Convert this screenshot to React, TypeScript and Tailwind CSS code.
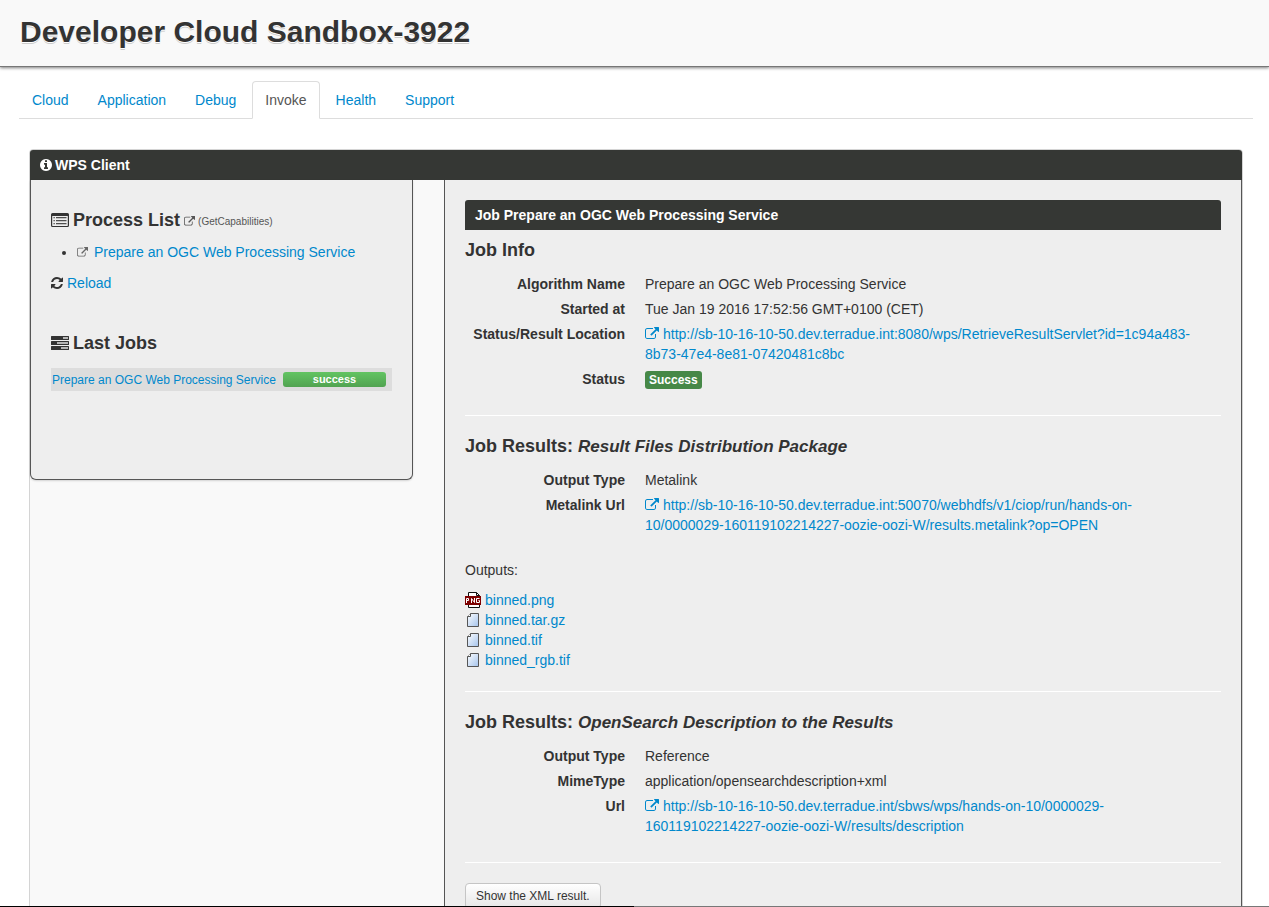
import type { ReactNode } from "react";

const linkClass = "text-[#0088cc] hover:underline";

function ExternalIcon({ className }: { className: string }) {
  return (
    <svg viewBox="0 0 1792 1792" fill="currentColor" aria-hidden="true" className={className}>
      <path d="M1408 928v320q0 119-84.5 203.5t-203.5 84.5h-832q-119 0-203.5-84.5t-84.5-203.5v-832q0-119 84.5-203.5t203.5-84.5h704q14 0 23 9t9 23v64q0 14-9 23t-23 9h-704q-66 0-113 47t-47 113v832q0 66 47 113t113 47h832q66 0 113-47t47-113v-320q0-14 9-23t23-9h64q14 0 23 9t9 23zm384-864v512q0 26-19 45t-45 19-45-19l-176-176-652 652q-10 10-23 10t-23-10l-114-114q-10-10-10-23t10-23l652-652-176-176q-19-19-19-45t19-45 45-19h512q26 0 45 19t19 45z" />
    </svg>
  );
}

function InfoIcon() {
  return (
    <svg viewBox="128 128 1536 1536" fill="currentColor" aria-hidden="true" className="h-3 w-3">
      <path d="M1152 1376v-160q0-14-9-23t-23-9h-96v-512q0-14-9-23t-23-9h-320q-14 0-23 9t-9 23v160q0 14 9 23t23 9h96v320h-96q-14 0-23 9t-9 23v160q0 14 9 23t23 9h448q14 0 23-9t9-23zm-128-896v-160q0-14-9-23t-23-9h-192q-14 0-23 9t-9 23v160q0 14 9 23t23 9h192q14 0 23-9t9-23zm640 416q0 209-103 385.5t-279.5 279.5-385.5 103-385.5-103-279.5-279.5-103-385.5 103-385.5 279.5-279.5 385.5-103 385.5 103 279.5 279.5 103 385.5z" />
    </svg>
  );
}

function ReloadIcon() {
  return (
    <svg viewBox="128 128 1536 1536" fill="currentColor" aria-hidden="true" className="h-3 w-3">
      <path d="M1639 1056q0 5-1 7-64 268-268 434.5t-478 166.5q-146 0-282.5-55t-243.5-157l-129 129q-19 19-45 19t-45-19-19-45v-448q0-26 19-45t45-19h448q26 0 45 19t19 45-19 45l-137 137q71 66 161 102t187 36q134 0 250-65t186-179q11-17 53-117 8-23 30-23h192q13 0 22.5 9.5t9.5 22.5zm25-800v448q0 26-19 45t-45 19h-448q-26 0-45-19t-19-45 19-45l138-138q-148-137-349-137-134 0-250 65t-186 179q-11 17-53 117-8 23-30 23h-199q-13 0-22.5-9.5t-9.5-22.5v-7q65-268 270-434.5t480-166.5q146 0 284 55.5t245 156.5l130-129q19-19 45-19t45 19 19 45z" />
    </svg>
  );
}

function ListIcon() {
  return (
    <svg viewBox="0 0 18 14" aria-hidden="true" className="h-3.5 w-[18px]">
      <path
        fill="currentColor"
        fillRule="evenodd"
        d="M1.5 0h15A1.5 1.5 0 0 1 18 1.5v11a1.5 1.5 0 0 1-1.5 1.5h-15A1.5 1.5 0 0 1 0 12.5v-11A1.5 1.5 0 0 1 1.5 0zM1.200 3v9.500q0 .4.4.4h14.800q.4 0 .4-.4V3z"
      />
      <path
        fill="currentColor"
        opacity="0.85"
        d="M2.500 4h1.300v1.200H2.500zM5 4h10.500v1.200H5zM2.500 7h1.300v1.200H2.500zM5 7h10.500v1.200H5zM2.500 10h1.300v1.200H2.500zM5 10h10.500v1.200H5z"
      />
    </svg>
  );
}

function TasksIcon() {
  return (
    <svg viewBox="0 0 18 14" aria-hidden="true" className="h-3.5 w-[18px]">
      <path
        fill="currentColor"
        d="M.6 0h16.800q.6 0 .6.6v2.800q0 .6-.6.6H.6Q0 4 0 3.400V.6Q0 0 .6 0zM.6 5h16.800q.6 0 .6.6v2.800q0 .6-.6.6H.6Q0 9 0 8.400V5.600Q0 5 .6 5zM.6 10h16.800q.6 0 .6.6v2.800q0 .6-.6.6H.6Q0 14 0 13.400v-2.800Q0 10 .6 10z"
      />
      <path fill="#b5b5b5" d="M12 1h5v2h-5zM6 6h11v2H6zM10 11h7v2h-7z" />
    </svg>
  );
}

function PngIcon() {
  return (
    <svg viewBox="0 0 16 16" aria-hidden="true" className="h-4 w-4 shrink-0">
      <path d="M3.500.5h8l3 3v12h-11z" fill="#fff" stroke="#111" />
      <path d="M11.500.5v3h3" fill="none" stroke="#111" />
      <rect x="0" y="4" width="16" height="9" fill="#7d0000" />
      <path
        d="M1.500 11V6.500h2v2h-2M6.500 11V6.500l3 4V6M14.500 6.500h-3v4h3v-2h-1"
        fill="none"
        stroke="#fff"
      />
    </svg>
  );
}

function FileIcon() {
  return (
    <svg viewBox="0 0 16 16" aria-hidden="true" className="h-4 w-4 shrink-0">
      <defs>
        <linearGradient id="sheet" x1="0" y1="0" x2="1" y2="1">
          <stop offset="0.1" stopColor="#f4f8fd" />
          <stop offset="1" stopColor="#a4c3ec" />
        </linearGradient>
      </defs>
      <path d="M5.500 1.500h8v13h-11v-10z" fill="url(#sheet)" stroke="#555" />
      <path d="M5.500 1.500v3h-3" fill="#fff" stroke="#555" />
    </svg>
  );
}

function Bar({ children }: { children: ReactNode }) {
  return (
    <h2 className="flex h-[30px] items-center gap-[3px] rounded-t-[3px] bg-[#353734] px-2.5 text-sm font-bold text-white">
      {children}
    </h2>
  );
}

function Row({ label, children }: { label: string; children: ReactNode }) {
  return (
    <div className="mb-[5px] flex gap-5">
      <dt className="w-40 shrink-0 text-right font-bold">{label}</dt>
      <dd className="min-w-0 flex-1 pr-4">{children}</dd>
    </div>
  );
}

function Url({ children }: { children: ReactNode }) {
  return (
    <a href="#result" className={linkClass}>
      <ExternalIcon className="mr-1 inline h-3.5 w-3.5 align-[-2px]" />
      {children}
    </a>
  );
}

function Rule() {
  return <hr className="border-t border-white" />;
}

const tabs = ["Cloud", "Application", "Debug", "Invoke", "Health", "Support"];
const files = ["binned.png", "binned.tar.gz", "binned.tif", "binned_rgb.tif"];

export default function App() {
  return (
    <div className="flex h-screen flex-col overflow-hidden bg-white font-['Helvetica_Neue','Liberation_Sans',sans-serif] text-sm/5 text-[#333333]">
      <header className="relative flex h-[67px] shrink-0 items-start border-b border-[#777] bg-[#f9f9f9] px-5 pt-3 shadow-[0_1px_3px_rgba(0,0,0,0.5)]">
        <h1 className="text-[30px] leading-10 font-bold [text-shadow:0_1px_0_#fff,0_2px_0_#ccc]">
          Developer Cloud Sandbox-3922
        </h1>
      </header>

      <main className="min-h-0 flex-1 overflow-hidden pt-3.5">
        <nav className="mr-4 ml-[19px] flex gap-[3px] border-b border-[#dddddd]">
          {tabs.map((tab) =>
            tab === "Invoke" ? (
              <a
                key={tab}
                href="#invoke"
                aria-current="page"
                className="-mb-px rounded-t border border-[#dddddd] border-b-white bg-white px-3 py-2 text-[#555555]"
              >
                {tab}
              </a>
            ) : (
              <a
                key={tab}
                href={`#${tab.toLowerCase()}`}
                className="-mb-px border border-transparent px-3 py-2 text-[#0088cc]"
              >
                {tab}
              </a>
            ),
          )}
        </nav>

        <div className="mt-[30px] mr-[26px] ml-[29px] rounded-t border border-[#d4d4d4] bg-[#f9f9f9]">
          <Bar>
            <InfoIcon />
            WPS Client
          </Bar>
          <div className="flex items-start gap-[31px]">
            <section className="h-[300px] w-[383px] shrink-0 rounded-b-md border border-t-0 border-[#555] bg-[#eeeeee] px-5 pt-5 shadow-[0_1px_2px_rgba(0,0,0,0.15)]">
              <h3 className="flex h-10 items-center gap-1 text-lg font-bold">
                <ListIcon />
                Process List
                <a
                  href="#capabilities"
                  className="flex items-center gap-[3px] pt-1 text-[10px] font-normal text-[#555]"
                >
                  <ExternalIcon className="h-[11px] w-[11px]" />
                  (GetCapabilities)
                </a>
              </h3>
              <ul className="mt-0.5 list-disc pl-[26px]">
                <li>
                  <a href="#process" className={linkClass}>
                    <ExternalIcon className="mr-1.5 inline h-[11px] w-[11px] align-[-1px] text-[#666]" />
                    Prepare an OGC Web Processing Service
                  </a>
                </li>
              </ul>
              <button type="button" className="mt-[11px] flex items-center gap-1">
                <ReloadIcon />
                <span className="text-[#0088cc]">Reload</span>
              </button>

              <h3 className="mt-[30px] flex h-10 items-center gap-1 text-lg font-bold">
                <TasksIcon />
                Last Jobs
              </h3>
              <div className="mt-[5px] flex h-[23px] items-center justify-between bg-[#dddddd] pr-1.5 pl-px text-xs">
                <a href="#job" className={linkClass}>
                  Prepare an OGC Web Processing Service
                </a>
                <span className="flex h-[15px] w-[103px] items-center justify-center rounded-[3px] bg-linear-to-b from-[#62c462] to-[#51a351] text-[11px] font-bold text-white">
                  success
                </span>
              </div>
            </section>

            <section className="min-w-0 flex-1 border border-y-0 border-[#555] bg-[#eeeeee] p-5">
              <Bar>Job Prepare an OGC Web Processing Service</Bar>
              <h3 className="text-lg/10 font-bold">Job Info</h3>
              <dl className="mt-1 mb-[26px]">
                <Row label="Algorithm Name">Prepare an OGC Web Processing Service</Row>
                <Row label="Started at">Tue Jan 19 2016 17:52:56 GMT+0100 (CET)</Row>
                <Row label="Status/Result Location">
                  <Url>http://sb-10-16-10-50.dev.terradue.int:8080/wps/RetrieveResultServlet?id=1c94a483-8b73-47e4-8e81-07420481c8bc</Url>
                </Row>
                <Row label="Status">
                  <span className="inline-block rounded-[3px] bg-[#468847] px-1 py-0.5 text-xs/[14px] font-bold text-white">
                    Success
                  </span>
                </Row>
              </dl>
              <Rule />
              <h3 className="mt-2.5 text-lg/10 font-bold">
                Job Results: <em className="text-[17px]/none">Result Files Distribution Package</em>
              </h3>
              <dl className="mt-1">
                <Row label="Output Type">Metalink</Row>
                <Row label="Metalink Url">
                  <Url>http://sb-10-16-10-50.dev.terradue.int:50070/webhdfs/v1/ciop/run/hands-on-10/0000029-160119102214227-oozie-oozi-W/results.metalink?op=OPEN</Url>
                </Row>
              </dl>
              <p className="mt-[25px] mb-2.5">Outputs:</p>
              <ul className="mb-[21px]">
                {files.map((file) => (
                  <li key={file} className="flex h-5 items-center gap-1">
                    {file.endsWith(".png") ? <PngIcon /> : <FileIcon />}
                    <a href={`#${file}`} className={linkClass}>
                      {file}
                    </a>
                  </li>
                ))}
              </ul>
              <Rule />
              <h3 className="mt-2.5 text-lg/10 font-bold">
                Job Results: <em className="text-[17px]/none">OpenSearch Description to the Results</em>
              </h3>
              <dl className="mt-1 mb-[26px]">
                <Row label="Output Type">Reference</Row>
                <Row label="MimeType">application/opensearchdescription+xml</Row>
                <Row label="Url">
                  <Url>http://sb-10-16-10-50.dev.terradue.int/sbws/wps/hands-on-10/0000029-160119102214227-oozie-oozi-W/results/description</Url>
                </Row>
              </dl>
              <Rule />
              <button
                type="button"
                className="mt-5 rounded border border-[#c5c5c5] bg-linear-to-b from-white to-[#e6e6e6] px-2.5 py-0.5 text-xs/5"
              >
                Show the XML result.
              </button>
            </section>
          </div>
        </div>
      </main>
      <div className="h-px shrink-0 bg-linear-to-r from-black from-50% to-[#777] to-50%" />
    </div>
  );
}
